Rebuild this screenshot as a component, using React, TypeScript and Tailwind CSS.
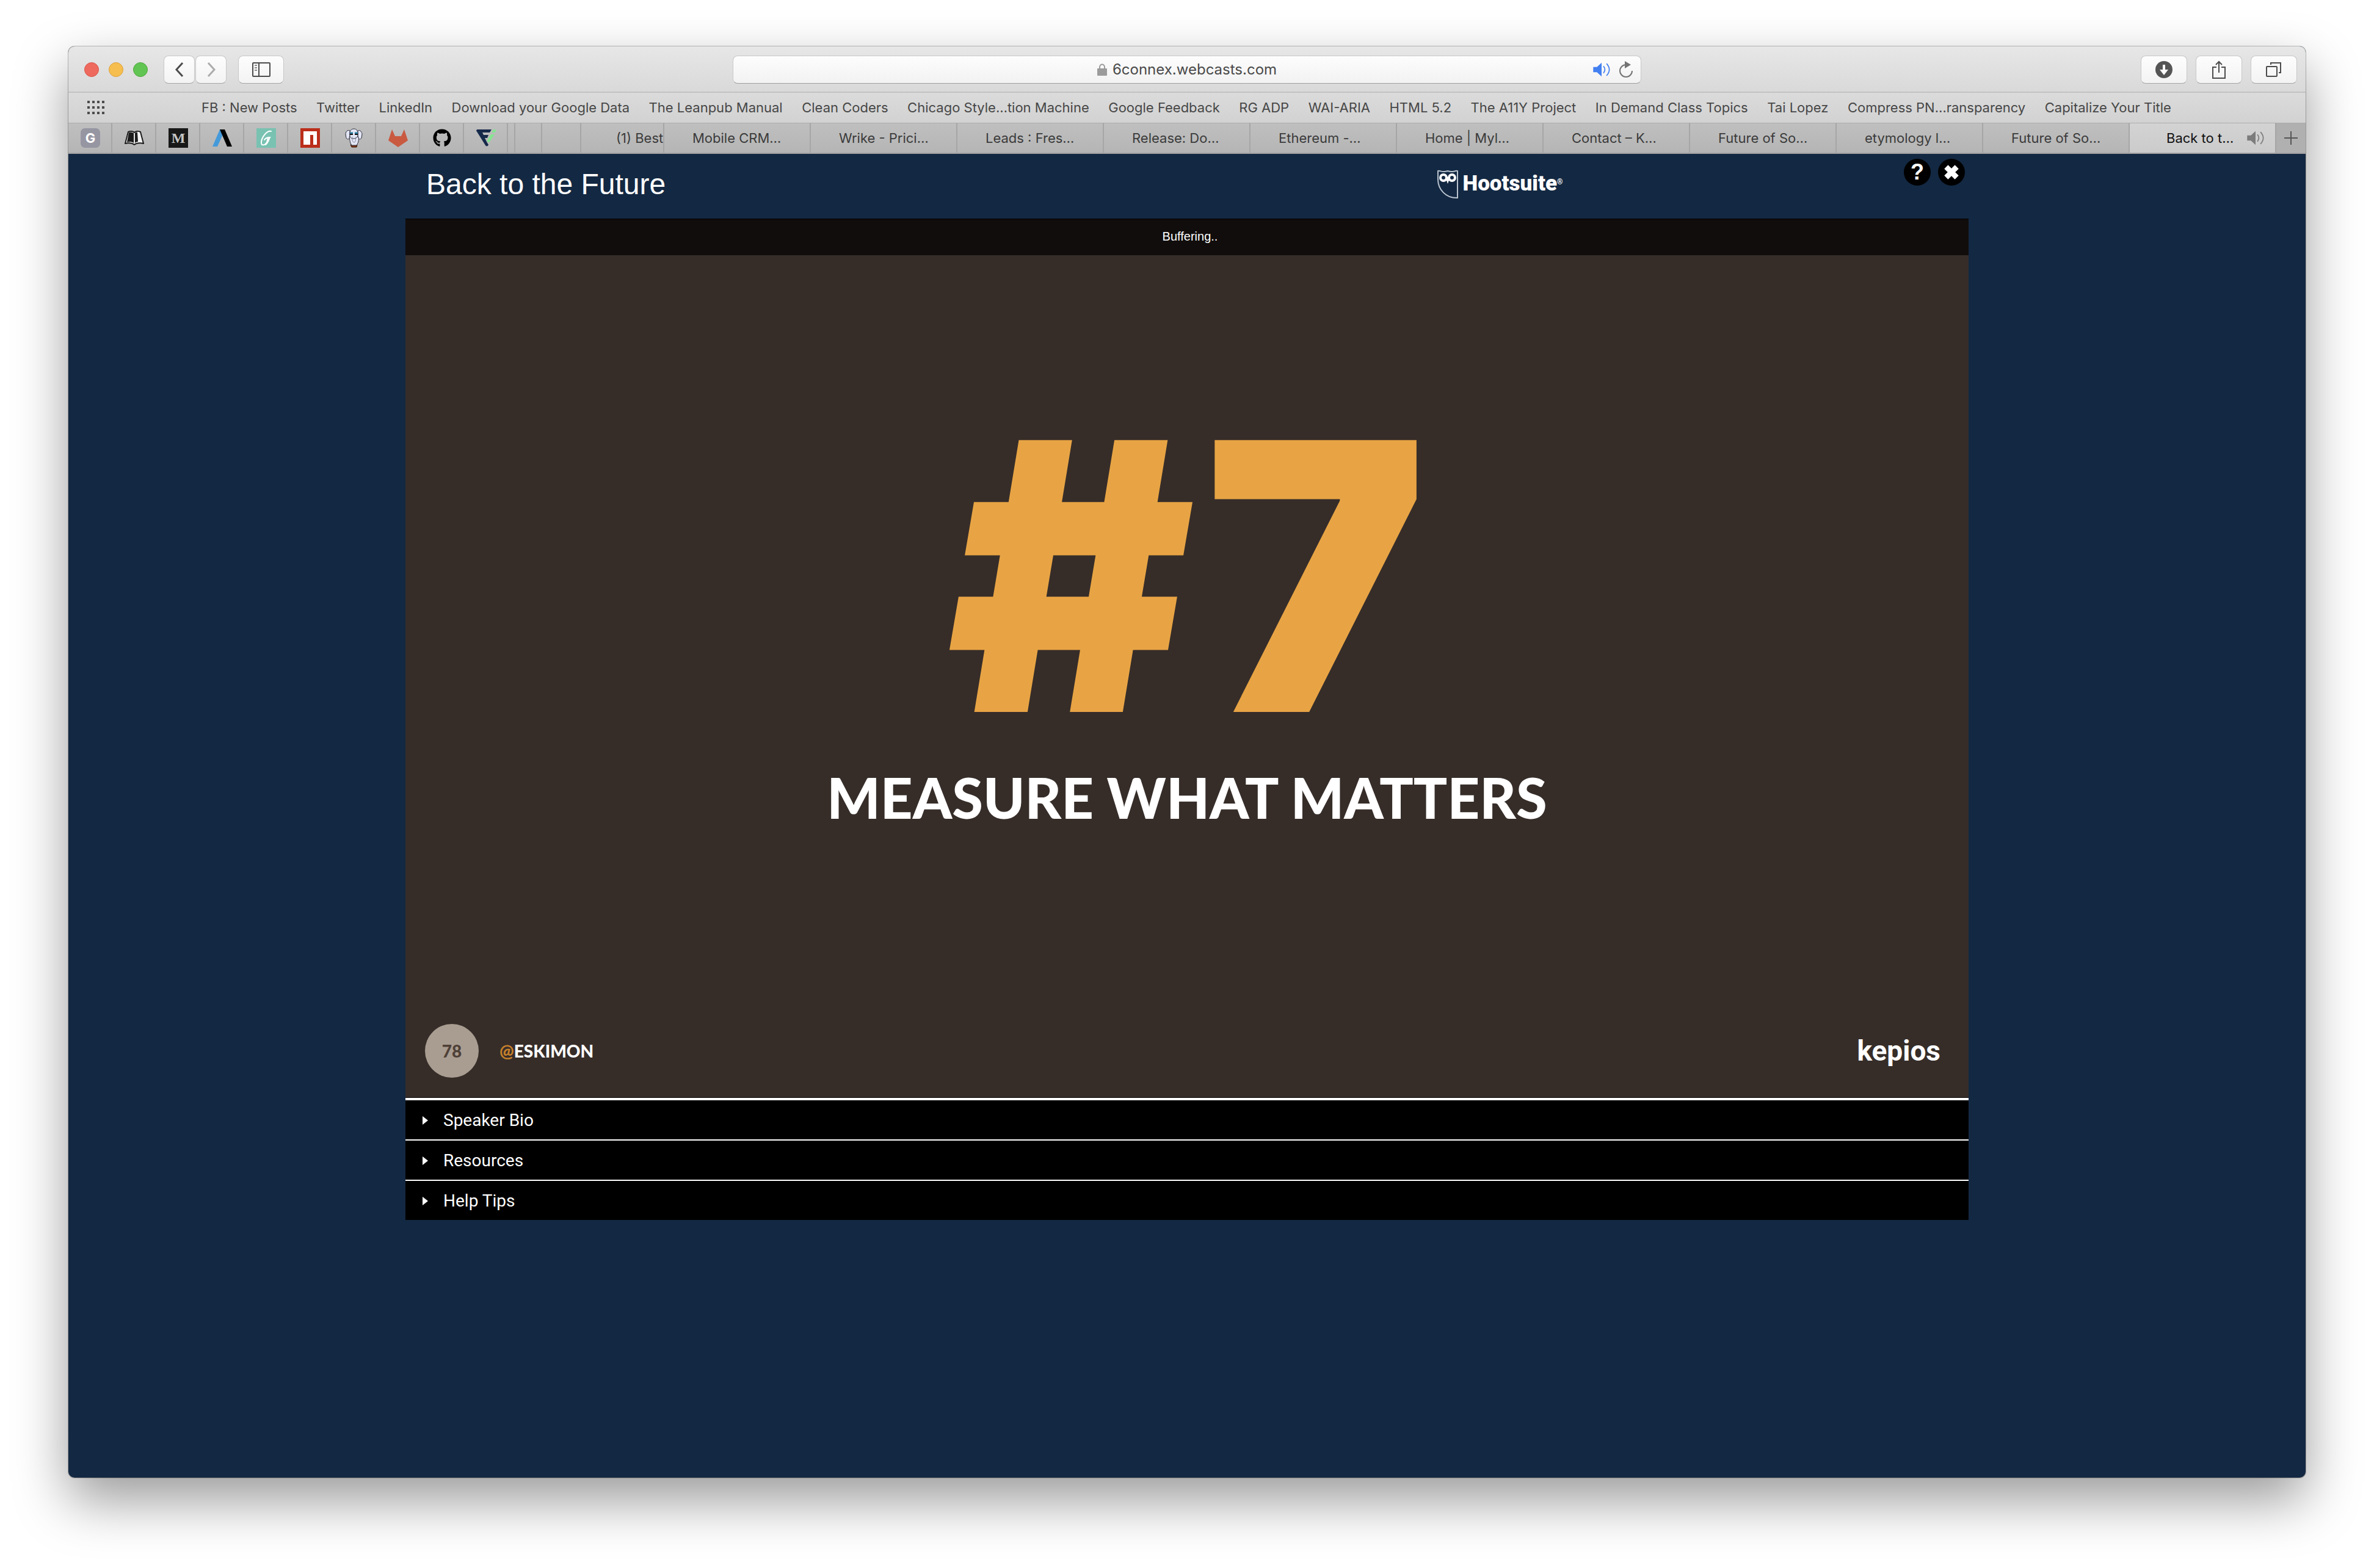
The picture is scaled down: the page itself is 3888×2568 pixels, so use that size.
import React from "react";
import { FaGithub } from "react-icons/fa";

const bookmarks = [
  "FB : New Posts",
  "Twitter",
  "LinkedIn",
  "Download your Google Data",
  "The Leanpub Manual",
  "Clean Coders",
  "Chicago Style…tion Machine",
  "Google Feedback",
  "RG ADP",
  "WAI-ARIA",
  "HTML 5.2",
  "The A11Y Project",
  "In Demand Class Topics",
  "Tai Lopez",
  "Compress PN…ransparency",
  "Capitalize Your Title",
];

const tabs = [
  "Mobile CRM…",
  "Wrike - Prici…",
  "Leads : Fres…",
  "Release: Do…",
  "Ethereum -…",
  "Home | Myl…",
  "Contact – K…",
  "Future of So…",
  "etymology l…",
  "Future of So…",
];

const sections = ["Speaker Bio", "Resources", "Help Tips"];

function LetterG() {
  return (
    <span className="flex size-8 items-center justify-center rounded-[7px] bg-[#9696a3] text-[22px] font-bold leading-8 text-white">
      G
    </span>
  );
}

function Book() {
  return (
    <svg viewBox="0 0 32 32" className="size-8">
      <path d="M6 6C10 4 14 5 16 7C18 5 22 4 26 6L31 25C26 24 20 24 16 27C12 24 6 24 1 25Z" fill="#f2f2f2" stroke="#1c1c1c" strokeWidth="2" strokeLinejoin="round" />
      <path d="M7 7C10 6 13 7 15 8V24C12 22 8 22 4 23Z" fill="#1c1c1c" />
      <path d="M16 9V24" stroke="#d8d8d8" strokeWidth="1" />
      <path d="M17 8C18 7 20 6 21 7L22 22C20 22 18 23 17 24Z" fill="#1c1c1c" />
    </svg>
  );
}

function Medium() {
  return (
    <span className="flex size-8 items-center justify-center bg-[#181818] font-['Liberation_Serif',serif] text-[24px] font-bold leading-8 text-[#c4c4c4]">
      M
    </span>
  );
}

function Chevron() {
  return (
    <svg viewBox="0 0 32 32" className="size-8">
      <path d="M12 2H16L18 8L8 30H0Z" fill="#459ada" />
      <path d="M12 2H20L32 30H24Z" fill="#000" />
    </svg>
  );
}

function Script() {
  return (
    <svg viewBox="0 0 32 32" className="size-8">
      <rect width="32" height="32" fill="#79c2b2" />
      <path d="M24 5C17 3 9 15 8 22C7 29 13 29 17 23L19 16M13 19C15 16 19 15 22 15C20 19 19 24 15 27" fill="none" stroke="#fff" strokeWidth="2" strokeLinecap="round" />
    </svg>
  );
}

function Npm() {
  return (
    <svg viewBox="0 0 32 32" className="size-8">
      <rect width="32" height="32" fill="#bb2e1b" />
      <path d="M5 5H27V27H21V11H16V27H5Z" fill="#fff" />
    </svg>
  );
}

function Elephant() {
  return (
    <svg viewBox="0 0 32 32" className="size-8">
      <path d="M10 27H21L20 31H12Z" fill="#7a3414" stroke="#3a1a0c" strokeWidth="1" />
      <g fill="#e3e6f5" stroke="#2c2c3a" strokeWidth="1">
        <path d="M9 4C5 2 2 6 2 10L3 16C5 19 8 18 9 15Z" />
        <path d="M22 4C26 2 29 7 29 10L28 16C26 19 23 18 22 15Z" />
        <path d="M8 14C9 20 9 24 12 28H20C23 24 24 18 23 14Z" />
        <path d="M9 12C8 4 11 1 16 1C20 1 23 5 22 12C21 16 18 17 15 17C12 17 9 16 9 12Z" />
      </g>
      <path d="M13 14C12 20 14 24 17 23C19 21 18 18 19 14" fill="none" stroke="#8a8da3" strokeWidth="1" />
      <path d="M9 8H14M17 8H22" stroke="#2e7fa5" strokeWidth="3" />
      <path d="M9 10H14M17 10H22" stroke="#111" strokeWidth="2" />
    </svg>
  );
}

function Fox() {
  return (
    <svg viewBox="0 0 32 32" className="size-8">
      <path d="M6 2L11 13H21L26 2L32 20L16 31L0 20Z" fill="#c95a40" />
    </svg>
  );
}

function Flag() {
  return (
    <svg viewBox="0 0 32 32" className="size-8">
      <path d="M2 2H25L22 7H10L12 11H20L18 16H14L17 22L18 24L20 27C19 30 16 30 15 28L0 4C0 3 1 2 2 2Z" fill="#15294a" />
      <path d="M28 2H31C33 3 32 5 31 7H25Z" fill="#86e592" />
      <path d="M24 10H30L22 22C20 24 17 22 18 20Z" fill="#86e592" />
    </svg>
  );
}

function Speaker({ className }: { className: string }) {
  return (
    <svg viewBox="0 0 32 28" className={className}>
      <path d="M0 9H7L16 1V27L7 19H0Z" fill="currentColor" />
      <path d="M20 8C23 12 23 16 20 20M26 3C32 10 32 18 26 25" fill="none" stroke="currentColor" strokeWidth="2" strokeLinecap="round" />
    </svg>
  );
}

const pinned: [string, React.ReactNode][] = [
  ["G", <LetterG />],
  ["Leanpub", <Book />],
  ["Medium", <Medium />],
  ["Chevron", <Chevron />],
  ["Grammar", <Script />],
  ["npm", <Npm />],
  ["Elephant", <Elephant />],
  ["GitLab", <Fox />],
  ["GitHub", <FaGithub className="size-[30px] text-black" />],
  ["Freelance", <Flag />],
];

const toolButton =
  "flex h-[46px] items-center justify-center rounded-[8px] border border-[#c8c8c8] border-b-[#a6a6a6] bg-linear-to-b from-[#fdfdfd] to-[#f3f3f3] text-[#555555]";

function Toolbar() {
  return (
    <div className="flex h-[76px] items-center border-b-2 border-[#c2c2c2] bg-linear-to-b from-[#e7e7e7] to-[#d9d9d9] px-[14px] pt-[2px]">
      <div className="flex flex-1 items-center">
        <div className="ml-3 mr-[26px] flex gap-4">
          <button aria-label="Close window" className="size-6 rounded-full border border-[#d9564b] bg-[#ee6a5f]" />
          <button aria-label="Minimise window" className="size-6 rounded-full border border-[#dea13a] bg-[#f5be4f]" />
          <button aria-label="Zoom window" className="size-6 rounded-full border border-[#50a73d] bg-[#61c554]" />
        </div>
        <button aria-label="Back" className={`${toolButton} w-[51px]`}>
          <svg viewBox="0 0 16 26" className="h-[26px] w-4">
            <path d="M13 2L3 13L13 24" fill="none" stroke="#4c4c4c" strokeWidth="3" />
          </svg>
        </button>
        <button aria-label="Forward" className={`${toolButton} ml-px w-[51px]`}>
          <svg viewBox="0 0 16 26" className="h-[26px] w-4">
            <path d="M3 2L13 13L3 24" fill="none" stroke="#acacac" strokeWidth="3" />
          </svg>
        </button>
        <button aria-label="Sidebar" className={`${toolButton} ml-[19px] w-[75px]`}>
          <svg viewBox="0 0 30 24" className="h-6 w-[30px]" fill="none" stroke="#4c4c4c" strokeWidth="2">
            <rect x="1" y="1" width="28" height="22" rx="1" />
            <path d="M11 1V23" />
            <path d="M4 5H8M4 9H8M4 13H8" stroke="#8a8a8a" />
          </svg>
        </button>
      </div>
      <div className="grid h-[46px] w-[42%] max-w-[1488px] grid-cols-[1fr_auto_1fr] items-center rounded-[8px] border border-[#c8c8c8] border-b-[#9f9f9f] bg-linear-to-b from-[#fdfdfd] to-[#f2f2f2]">
        <span />
        <label className="flex items-center gap-[9px]">
          <svg viewBox="0 0 16 20" className="h-5 w-4">
            <path d="M4 9V6C4 0 12 0 12 6V9" fill="none" stroke="#9b9b9b" strokeWidth="2" />
            <rect y="8" width="16" height="12" rx="1" fill="#9b9b9b" />
          </svg>
          <input aria-label="Address" defaultValue="6connex.webcasts.com" className="[field-sizing:content] bg-transparent text-[24px] leading-8 text-[#4a4a4a] outline-none" />
        </label>
        <div className="flex items-center justify-end gap-3 pr-3">
          <button aria-label="Mute tab">
            <Speaker className="h-6 w-8 text-[#427ff1]" />
          </button>
          <button aria-label="Reload">
            <svg viewBox="0 0 24 28" className="h-7 w-6">
              <path d="M12 6A10 10 0 1 0 22 16" fill="none" stroke="#747474" strokeWidth="2" />
              <path d="M10 0L20 6L10 12Z" fill="#747474" />
            </svg>
          </button>
        </div>
      </div>
      <div className="flex flex-1 items-center justify-end gap-[14px]">
        <button aria-label="Downloads" className={`${toolButton} w-[76px]`}>
          <svg viewBox="0 0 28 28" className="size-7">
            <circle cx="14" cy="14" r="14" fill="#555" />
            <path d="M12 6H16V14H21L14 23L7 14H12Z" fill="#fff" />
          </svg>
        </button>
        <button aria-label="Share" className={`${toolButton} w-[76px]`}>
          <svg viewBox="0 0 24 30" className="h-[30px] w-6" fill="none" stroke="#4c4c4c" strokeWidth="2">
            <path d="M8 11H2V29H22V11H16" />
            <path d="M12 20V2M7 7L12 2L17 7" />
          </svg>
        </button>
        <button aria-label="Show all tabs" className={`${toolButton} w-[76px]`}>
          <svg viewBox="0 0 26 24" className="h-6 w-[26px]" fill="none" stroke="#4c4c4c" strokeWidth="2">
            <rect x="1" y="7" width="17" height="16" rx="1" />
            <path d="M8 4V1H24V17H21" />
          </svg>
        </button>
      </div>
    </div>
  );
}

function Bookmarks() {
  return (
    <nav className="flex h-[50px] items-center border-b border-[#acacac] bg-linear-to-b from-[#dbdbdb] to-[#d2d2d2] px-[30px] pb-[2px] text-[22px] leading-7 text-[#474747]">
      <button aria-label="Favourites" className="mr-[158px]">
        <svg viewBox="0 0 30 22" className="h-[22px] w-[30px]" fill="none" stroke="#4c4c4c" strokeWidth="4">
          <path d="M1 2H30M1 11H30M1 20H30" strokeDasharray="4 4" />
        </svg>
      </button>
      <div className="mr-[190px] flex flex-1 justify-between whitespace-nowrap">
        {bookmarks.map((name) => (
          <a key={name} href="#">
            {name}
          </a>
        ))}
      </div>
    </nav>
  );
}

function TabBar() {
  return (
    <div className="flex h-[50px] border-b-2 border-[#a3a3a3] bg-linear-to-b from-[#bfbfbf] to-[#b5b5b5] text-[22px] leading-[48px] text-[#3b3b3b]">
      {pinned.map(([name, icon]) => (
        <button key={name} aria-label={name} className="flex w-[72px] shrink-0 items-center justify-center border-r-2 border-[#a6a6a6] pl-[2px]">
          {icon}
        </button>
      ))}
      <span className="w-3 shrink-0 border-r-2 border-[#a6a6a6]" />
      <span className="w-11 shrink-0 border-r-2 border-[#a6a6a6]" />
      <span className="w-16 shrink-0 border-r-2 border-[#a6a6a6]" />
      <button className="w-[136px] shrink-0 overflow-hidden whitespace-nowrap border-r-2 border-[#a6a6a6] pl-[57px] text-left">(1) Best</button>
      <div className="grid min-w-0 flex-1 grid-cols-11">
        {tabs.map((name, i) => (
          <button key={i} className="overflow-hidden whitespace-nowrap border-r-2 border-[#a6a6a6] pl-[46px] text-left">
            {name}
          </button>
        ))}
        <button className="flex items-center justify-between whitespace-nowrap border-r-2 border-[#a6a6a6] bg-linear-to-b from-[#d3d3d3] to-[#cbcbcb] pl-[60px] pr-4 text-[#111111]">
          Back to t…
          <Speaker className="h-6 w-8 text-[#7c7c7c]" />
        </button>
      </div>
      <button aria-label="New tab" className="flex w-12 shrink-0 items-center justify-center bg-[#b0b0b0]">
        <svg viewBox="0 0 22 22" className="size-[22px]">
          <path d="M0 11H22M11 0V22" stroke="#555" strokeWidth="2" />
        </svg>
      </button>
    </div>
  );
}

function Header() {
  return (
    <header className="grid h-[106px] grid-cols-[66%_1fr_auto] text-white">
      <h1 className="pl-[34px] pt-[22px] font-['Liberation_Sans',sans-serif] text-[48px] leading-[56px]">Back to the Future</h1>
      <div className="flex items-start gap-2 pt-[26px]">
        <svg viewBox="0 0 34 48" className="h-12 w-[34px]" fill="none">
          <path d="M1 2C5 1 8 5 17 2C26 5 28 1 33 2V46C14 47 1 32 1 16Z" stroke="#b9c3cf" strokeWidth="2" />
          <circle cx="10" cy="13" r="5" stroke="#fff" strokeWidth="4" />
          <circle cx="24" cy="13" r="5" stroke="#fff" strokeWidth="4" />
          <path d="M13 12L17 23L21 12Z" fill="#fff" />
        </svg>
        <span className="flex font-['Roboto',sans-serif] text-[35px] font-black leading-[46px]">
          Hootsuite<span className="text-[12px] leading-[40px]">®</span>
        </span>
      </div>
      <div className="flex gap-3 pr-[6px] pt-2">
        <button aria-label="Help" className="size-11 rounded-full bg-black font-['Liberation_Sans',sans-serif] text-[36px] font-bold leading-[44px]">
          ?
        </button>
        <button aria-label="Close" className="flex size-11 items-center justify-center rounded-full bg-black">
          <svg viewBox="0 0 24 24" className="size-[26px]">
            <path d="M4 4L20 20M20 4L4 20" stroke="#fff" strokeWidth="8" />
          </svg>
        </button>
      </div>
    </header>
  );
}

function Slide() {
  return (
    <div className="flex aspect-[2560/1379] w-full flex-col bg-[#362d29] font-['Lato',sans-serif] text-white">
      <div className="flex flex-1 flex-col items-center pt-[220px] font-black">
        <p className="flex gap-4 font-['Inter',sans-serif] text-[612px] leading-[612px] text-[#e8a444]">
          <span>#</span>
          <span>7</span>
        </p>
        <p className="whitespace-nowrap text-[92px] leading-[112px]">MEASURE WHAT MATTERS</p>
      </div>
      <div className="flex items-center px-8 pb-8">
        <span className="flex size-[88px] items-center justify-center rounded-full bg-[#a99d91] text-[28px] font-black text-[#4f4037]">78</span>
        <span className="ml-[34px] text-[28px] font-black">
          <span className="text-[#c57f2a]">@</span>ESKIMON
        </span>
        <span className="ml-auto mr-[14px] font-['Roboto',sans-serif] text-[46px] font-bold">kepios</span>
      </div>
    </div>
  );
}

export default function App() {
  return (
    <div className="flex min-h-screen flex-col bg-white px-28 pb-[148px] pt-[76px] font-['Inter',sans-serif]">
      <div className="flex flex-1 flex-col overflow-hidden rounded-[10px] bg-[#132842] shadow-[0_0_0_1px_rgba(0,0,0,0.25),0_37px_88px_rgba(0,0,0,0.4)]">
        <Toolbar />
        <Bookmarks />
        <TabBar />
        <main className="mx-auto w-full max-w-[2560px]">
          <Header />
          <div className="h-[60px] border-t border-black bg-[#110d0c] pl-[10px] text-center font-['Liberation_Sans',sans-serif] text-[20px] leading-[56px] text-white">Buffering..</div>
          <Slide />
          <div className="border-t border-black bg-black">
            <div className="border-t-2 border-white">
              {sections.map((name) => (
                <button key={name} className="flex h-[66px] w-full items-center gap-6 border-t-2 border-white pl-7 pt-[2px] text-left font-['Roboto',sans-serif] text-[28px] leading-8 text-white">
                  <svg viewBox="0 0 10 16" className="h-4 w-[10px]">
                    <path d="M0 1L9 8L0 15Z" fill="#fff" />
                  </svg>
                  {name}
                </button>
              ))}
            </div>
          </div>
        </main>
      </div>
    </div>
  );
}
